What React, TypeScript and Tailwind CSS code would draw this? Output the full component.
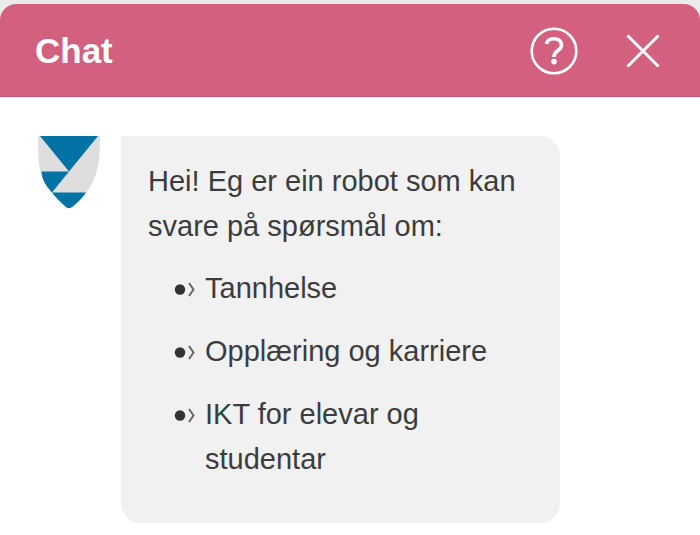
const topics = ['Tannhelse', 'Opplæring og karriere', 'IKT for elevar og studentar'];

function HelpIcon() {
  return (
    <svg width="48" height="48" viewBox="0 0 48 48" fill="none" stroke="currentColor" aria-hidden="true">
      <circle cx="24" cy="24" r="22.3" strokeWidth="2.6" />
      <path
        d="M16.500 17C17 13.500 20 11.700 23.800 11.700c4.600 0 7.700 2.500 7.700 6.400 0 2.900-1.600 4.300-4.100 5.900-2.500 1.600-3.400 2.800-3.400 6"
        strokeWidth="3.600"
      />
      <circle cx="24" cy="34.600" r="2.800" fill="currentColor" stroke="none" />
    </svg>
  );
}

function CloseIcon() {
  return (
    <svg width="34" height="34" viewBox="0 0 34 34" fill="none" stroke="currentColor" aria-hidden="true">
      <path d="M1.500 1.500l31 31M32.500 1.500l-31 31" strokeWidth="3" />
    </svg>
  );
}

function Shield() {
  return (
    <svg width="64" height="74" viewBox="0 0 64 74" className="shrink-0" aria-hidden="true">
      <path d="M1 0H63C63 14 62.500 28 58.500 39C56 47 52 53 48.500 57H14L5 41C1 29 1 14 1 0Z" fill="#dedede" />
      <path d="M3 0H61L32 35.500Z" fill="#0072a3" />
      <path d="M4.500 35.500H32L15 56.500C9 50 5 44 4.500 35.500Z" fill="#0072a3" />
      <path d="M15 56.500H49C45 63 39 68 35 71Q32 73.500 29 71C24 67 19 62 15 56.500Z" fill="#0072a3" />
    </svg>
  );
}

// Round bullet followed by a thin chevron
function TopicMarker() {
  return (
    <svg width="31" height="45" viewBox="0 0 31 45" fill="none" className="shrink-0" aria-hidden="true">
      <circle cx="6" cy="23.500" r="5.200" fill="#333" />
      <path d="M15 17l4.500 6.500L15 30" stroke="#666" strokeWidth="2" />
    </svg>
  );
}

export default function App() {
  return (
    <div className="min-h-screen bg-[#ebebeb] pt-1 font-['Liberation_Sans',Arial,sans-serif]">
      <div className="min-h-[calc(100vh-4px)] rounded-t-2xl bg-white">
        <header className="flex items-center justify-between rounded-t-2xl border-b border-[#c9536f] bg-[#d3607e] pt-[23px] pr-10 pb-[21px] pl-[35px] text-white">
          <h1 className="text-[35px] leading-[48px] font-bold">Chat</h1>
          <div className="flex items-center gap-12">
            <button type="button" aria-label="Hjelp">
              <HelpIcon />
            </button>
            <button type="button" aria-label="Lukk">
              <CloseIcon />
            </button>
          </div>
        </header>

        <main className="flex items-start gap-5 pt-[39px] pr-[140px] pb-3 pl-[37px]">
          <Shield />
          <div className="flex-1 rounded-[20px] rounded-tl-none bg-[#f1f1f1] px-[27px] pt-[23px] pb-[41px] text-[29px] leading-[45px] text-[#3c3c3c]">
            <p>Hei! Eg er ein robot som kan svare på spørsmål om:</p>
            <ul className="mt-[17px] space-y-[18px] pl-[26px]">
              {topics.map((topic) => (
                <li key={topic} className="flex">
                  <TopicMarker />
                  <span>{topic}</span>
                </li>
              ))}
            </ul>
          </div>
        </main>
      </div>
    </div>
  );
}
